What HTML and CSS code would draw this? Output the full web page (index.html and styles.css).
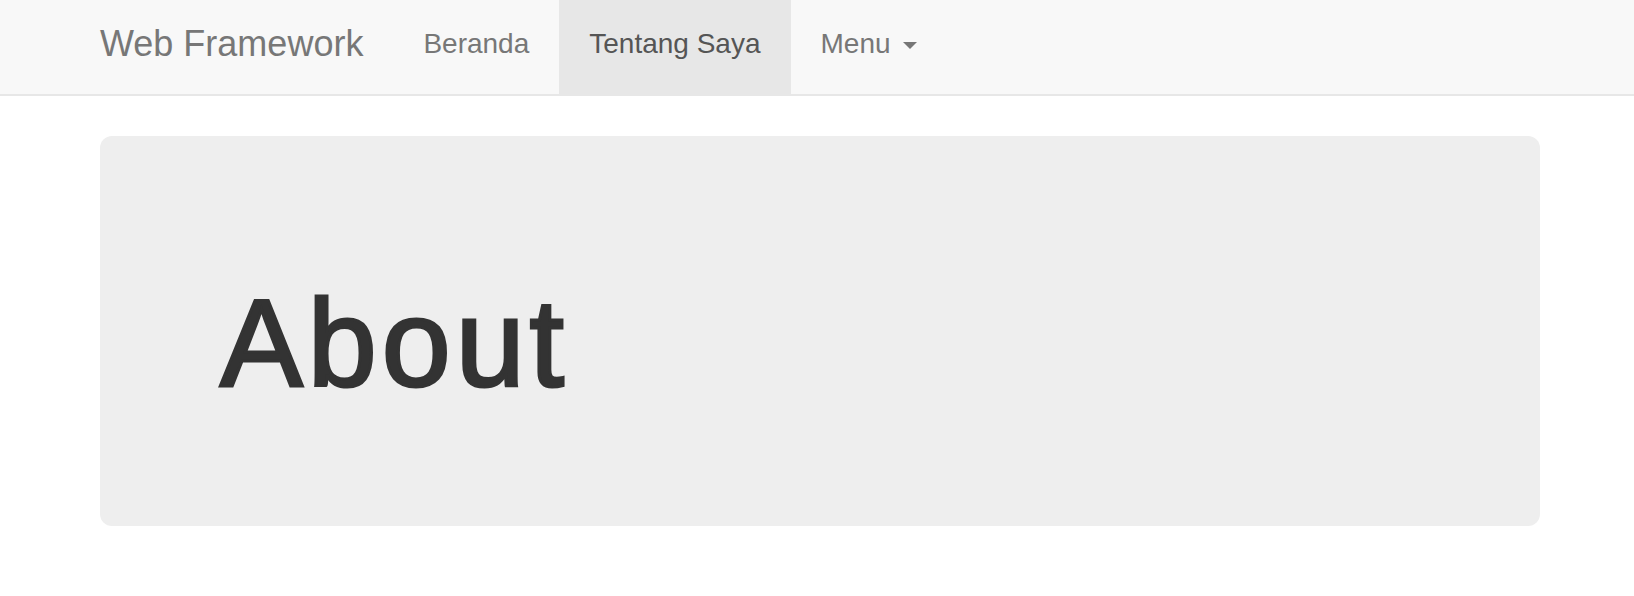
FILE: index.html
```html
<!DOCTYPE html>
<html lang="id">
<head>
<meta charset="utf-8">
<title>About</title>
<link rel="stylesheet" href="styles.css">
</head>
<body>
<nav class="navbar">
  <div class="container navbar-inner">
    <a class="brand" href="#">Web Framework</a>
    <ul class="nav">
      <li class="nav-item"><a class="nav-link" href="#">Beranda</a></li>
      <li class="nav-item active"><a class="nav-link" href="#">Tentang Saya</a></li>
      <li class="nav-item"><a class="nav-link" href="#">Menu<span class="caret"></span></a></li>
    </ul>
  </div>
</nav>
<main class="container">
  <section class="jumbotron">
    <h1 class="title">About</h1>
  </section>
</main>
</body>
</html>
```

FILE: styles.css
```css
* { box-sizing: border-box; }

html, body {
  margin: 0;
  padding: 0;
  background: #fff;
  font-family: "Liberation Sans", Arial, Helvetica, sans-serif;
  color: #333;
}

.container {
  width: 1440px;
  margin-left: 100px;
}

.navbar {
  background: #f8f8f8;
  border-bottom: 2px solid #e7e7e7;
  height: 96px;
}

.navbar-inner {
  display: flex;
  align-items: flex-start;
  height: 94px;
}

.brand {
  display: block;
  margin-left: -30px;
  padding: 26px 30px 0;
  height: 94px;
  font-size: 36px;
  line-height: 36px;
  color: #777;
  text-decoration: none;
}

.nav {
  display: flex;
  list-style: none;
  margin: 0;
  padding: 0;
  height: 94px;
}

.nav-item {
  height: 94px;
}

.nav-item.active {
  background: #e7e7e7;
}

.nav-link {
  display: block;
  height: 94px;
  padding: 30px 30px 0;
  font-size: 28px;
  line-height: 28px;
  color: #777;
  text-decoration: none;
}

.nav-item.active .nav-link {
  color: #555;
}

.caret {
  display: inline-block;
  width: 0;
  height: 0;
  margin-left: 12px;
  vertical-align: middle;
  border-top: 7px solid #777;
  border-left: 7.5px solid transparent;
  border-right: 7.5px solid transparent;
}

.jumbotron {
  margin-top: 40px;
  height: 390px;
  padding: 138px 120px 114px;
  background: #eee;
  border-radius: 12px;
}

.title {
  margin: 0;
  font-family: "Liberation Sans", Arial, Helvetica, sans-serif;
  font-size: 124px;
  line-height: 138px;
  font-weight: normal;
  letter-spacing: 5px;
  color: #333;
  -webkit-text-stroke: 3px #333;
}
```
